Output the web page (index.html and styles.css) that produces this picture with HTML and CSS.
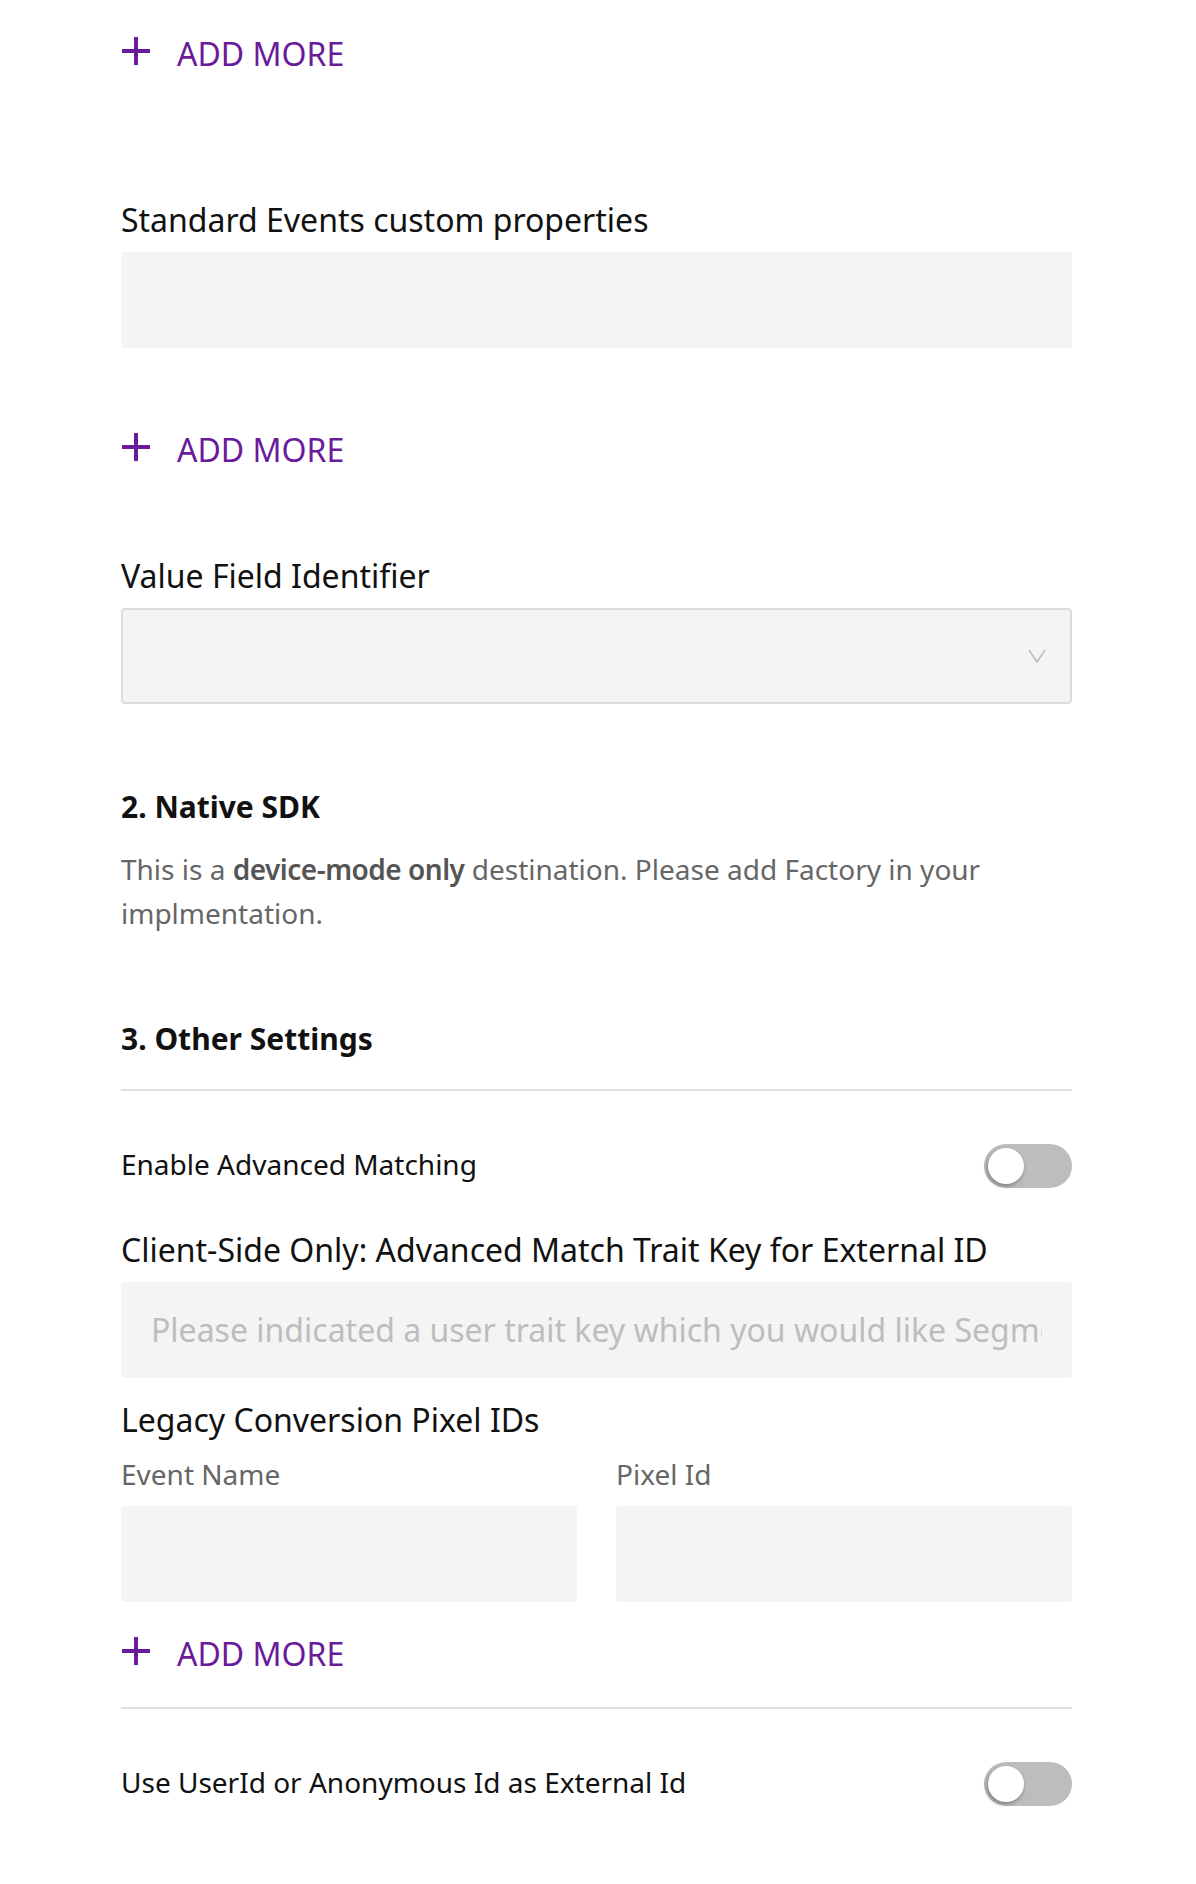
FILE: index.html
```html
<!DOCTYPE html>
<html lang="en">
<head>
<meta charset="utf-8">
<title>Settings</title>
<link rel="stylesheet" href="styles.css">
</head>
<body>
<div class="page">
  <button class="add-more first" type="button">
    <svg viewBox="0 0 28 28" aria-hidden="true"><rect x="12" y="0" width="4" height="28"/><rect x="0" y="12" width="28" height="4"/></svg>
    <span>ADD MORE</span>
  </button>

  <div class="field gap-lg">
    <div class="label">Standard Events custom properties</div>
    <div class="input"></div>
  </div>

  <button class="add-more after-input" type="button">
    <svg viewBox="0 0 28 28" aria-hidden="true"><rect x="12" y="0" width="4" height="28"/><rect x="0" y="12" width="28" height="4"/></svg>
    <span>ADD MORE</span>
  </button>

  <div class="field gap-md">
    <div class="label">Value Field Identifier</div>
    <div class="select">
      <svg class="chevron" viewBox="0 0 18 14" aria-hidden="true"><path d="M1 1 L9 13 L17 1"/></svg>
    </div>
  </div>

  <h2 class="heading gap-md">2. Native SDK</h2>
  <p class="note">This is a <strong>device-mode only</strong> destination. Please add Factory in your implmentation.</p>

  <h2 class="heading gap-heading">3. Other Settings</h2>
  <hr class="divider">

  <div class="toggle-row">
    <span class="toggle-label">Enable Advanced Matching</span>
    <span class="toggle"><span class="knob"></span></span>
  </div>

  <div class="field gap-sm">
    <div class="label">Client-Side Only: Advanced Match Trait Key for External ID</div>
    <div class="input placeholder"><span class="placeholder-text">Please indicated a user trait key which you would like Segment to send as external ID</span></div>
  </div>

  <div class="field gap-xs">
    <div class="label">Legacy Conversion Pixel IDs</div>
    <div class="pair">
      <div class="pair-col">
        <div class="sublabel">Event Name</div>
        <div class="input"></div>
      </div>
      <div class="pair-col">
        <div class="sublabel">Pixel Id</div>
        <div class="input"></div>
      </div>
    </div>
  </div>

  <button class="add-more after-pair" type="button">
    <svg viewBox="0 0 28 28" aria-hidden="true"><rect x="12" y="0" width="4" height="28"/><rect x="0" y="12" width="28" height="4"/></svg>
    <span>ADD MORE</span>
  </button>
  <hr class="divider after-add">

  <div class="toggle-row">
    <span class="toggle-label">Use UserId or Anonymous Id as External Id</span>
    <span class="toggle"><span class="knob"></span></span>
  </div>
</div>
</body>
</html>
```

FILE: styles.css
```css
* { box-sizing: border-box; }

html, body {
  margin: 0;
  background: #ffffff;
}

body {
  font-family: "Noto Sans", "Open Sans", sans-serif;
  color: #111111;
}

.page {
  width: 1196px;
  padding: 0 124px 78px 121px;
  display: flex;
  flex-direction: column;
}

/* ADD MORE buttons */
.add-more {
  display: flex;
  align-items: center;
  gap: 27px;
  height: 44px;
  padding: 0;
  border: 0;
  background: none;
  color: #6a1b9a;
  font-family: inherit;
  font-size: 32px;
  line-height: 44px;
  cursor: pointer;
  align-self: flex-start;
}
.add-more svg {
  width: 28px;
  height: 28px;
  margin-left: 1px;
  margin-bottom: 6px;
  fill: #6a1b9a;
  flex: none;
}
.add-more.first { margin-top: 32px; }
.add-more.after-input { margin-top: 80px; }
.add-more.after-pair { margin-top: 30px; }

/* Fields */
.field {
  display: flex;
  flex-direction: column;
  gap: 10px;
}
.gap-lg { margin-top: 122px; }
.gap-md { margin-top: 82px; }
.gap-sm { margin-top: 40px; }
.gap-xs { margin-top: 20px; }

.label {
  font-size: 32px;
  line-height: 44px;
  color: #111111;
}

.input {
  height: 96px;
  background: #f4f4f4;
  border-radius: 4px;
}

.input.placeholder {
  padding: 0 30px;
  display: flex;
  align-items: center;
}
.placeholder-text {
  display: block;
  width: 100%;
  font-size: 32px;
  line-height: 44px;
  color: #bdbdbd;
  white-space: nowrap;
  overflow: hidden;
}

.select {
  height: 96px;
  background: #f4f4f4;
  border: 2px solid #dcdcdc;
  border-radius: 4px;
  display: flex;
  align-items: center;
  justify-content: flex-end;
  padding-right: 24px;
}
.chevron {
  width: 18px;
  height: 14px;
  fill: none;
  stroke: #bdbdbd;
  stroke-width: 1.6;
}

/* Headings & text */
.heading {
  margin: 0;
  font-size: 30px;
  line-height: 44px;
  font-weight: 700;
  color: #111111;
}
.heading.gap-md { margin-top: 81px; }
.heading.gap-heading { margin-top: 82px; }

.note {
  margin: 18px 0 0;
  font-size: 28px;
  line-height: 44px;
  color: #666666;
}
.note strong {
  font-weight: 600;
  letter-spacing: -0.5px;
  color: #555555;
}

.divider {
  margin: 28px 0 0;
  border: 0;
  height: 2px;
  background: #e0e0e0;
}
.divider.after-add { margin-top: 31px; }

/* Toggle rows */
.toggle-row {
  margin-top: 53px;
  display: flex;
  align-items: center;
  justify-content: space-between;
  height: 44px;
}
.toggle-label {
  font-size: 28px;
  line-height: 44px;
  margin-bottom: 4px;
  color: #111111;
}
.toggle {
  position: relative;
  width: 88px;
  height: 44px;
  border-radius: 22px;
  background: #bdbdbd;
  flex: none;
}
.knob {
  position: absolute;
  left: 4px;
  top: 4px;
  width: 36px;
  height: 36px;
  border-radius: 50%;
  background: #ffffff;
  box-shadow: -1px 2px 4px rgba(0, 0, 0, 0.35);
}

/* Two-column inputs */
.pair {
  display: grid;
  grid-template-columns: 1fr 1fr;
  column-gap: 39px;
}
.pair-col {
  display: flex;
  flex-direction: column;
  gap: 10px;
}
.sublabel {
  font-size: 28px;
  line-height: 44px;
  color: #666666;
}
```
